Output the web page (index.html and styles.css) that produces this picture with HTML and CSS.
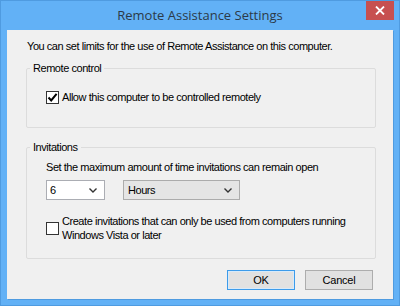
FILE: index.html
```html
<!DOCTYPE html>
<html>
  <head>
    <meta charset="UTF-8">
    <link rel="stylesheet" href="styles.css">
    <title>Remote Assistance Settings</title>
  </head>
  <body>
    <div id="window">
      <div id="titlebar">
        <span></span>
        <span class="title">Remote Assistance Settings</span>
        <button class="close" type="button">
          <svg width="10" height="9" viewBox="0 0 10 9"><path d="M1 0.5 L9 8.5 M9 0.5 L1 8.5" stroke="#fff" stroke-width="1.8" fill="none"/></svg>
        </button>
      </div>
      <div id="client">
        <p class="intro">You can set limits for the use of Remote Assistance on this computer.</p>
        <fieldset class="group group-control">
          <legend>Remote control</legend>
          <label class="check-row">
            <span class="checkbox checked">
              <svg width="11" height="11" viewBox="0 0 11 11"><path d="M1.5 5.5 L4.2 8.4 L9.6 1.8" stroke="#000" stroke-width="2" fill="none"/></svg>
            </span>
            <span>Allow this computer to be controlled remotely</span>
          </label>
        </fieldset>
        <fieldset class="group group-invites">
          <legend>Invitations</legend>
          <p class="hint">Set the maximum amount of time invitations can remain open</p>
          <div class="select-row">
            <div class="select select-edit">
              <span>6</span>
              <svg width="8" height="5" viewBox="0 0 8 5"><path d="M0.5 0.5 L4 4 L7.5 0.5" stroke="#333" stroke-width="1.4" fill="none"/></svg>
            </div>
            <div class="select select-list">
              <span>Hours</span>
              <svg width="8" height="5" viewBox="0 0 8 5"><path d="M0.5 0.5 L4 4 L7.5 0.5" stroke="#333" stroke-width="1.4" fill="none"/></svg>
            </div>
          </div>
          <label class="check-row check-two">
            <span class="checkbox"></span>
            <span>Create invitations that can only be used from computers running<br>Windows Vista or later</span>
          </label>
        </fieldset>
        <div class="buttons">
          <button class="btn btn-default" type="button">OK</button>
          <button class="btn" type="button">Cancel</button>
        </div>
      </div>
    </div>
  </body>
</html>
```

FILE: styles.css
```css
body {
  margin: 0;
  padding: 0;
  width: 400px;
  height: 306px;
  overflow: hidden;
  font-family: "Liberation Sans", Arial, sans-serif;
  font-size: 11px;
  letter-spacing: -0.45px;
  color: #000
}

#window {
  box-sizing: border-box;
  width: 400px;
  height: 306px;
  background-color: #62b1f6;
  border: 1px solid #4f9be0;
  display: flex;
  flex-direction: column
}

#titlebar {
  height: 29px;
  display: grid;
  grid-template-columns: 1fr auto 1fr;
  align-items: start
}

.title {
  font-family: "Open Sans", sans-serif;
  font-size: 13px;
  letter-spacing: 0;
  color: #2c3a48;
  padding-top: 5px
}

.close {
  justify-self: end;
  width: 28px;
  height: 19px;
  margin-right: 5px;
  border: none;
  padding: 0;
  background-color: #c75050;
  display: flex;
  align-items: center;
  justify-content: center
}

#client {
  flex: 1;
  margin: 0 6px 6px 6px;
  background-color: #f0f0f0;
  padding: 9px 17px 0 19px;
  box-shadow: 1px 1px 0 #4f9be0
}

.intro {
  margin: 0 0 8px 1px;
  line-height: 14px
}

.group {
  box-sizing: border-box;
  margin: 0;
  border: 1px solid #dcdcdc;
  border-radius: 2px;
  padding: 0 0 0 19px
}

.group legend {
  margin-left: -16px;
  padding: 0 3px;
  line-height: 14px
}

.group-control {
  height: 67px;
  padding-top: 15px
}

.group-invites {
  height: 119px;
  margin-top: 12px;
  padding-top: 6px
}

.check-row {
  display: flex;
  align-items: center;
  gap: 3px;
  line-height: 14px
}

.checkbox {
  box-sizing: border-box;
  width: 13px;
  height: 13px;
  border: 1px solid #333;
  background-color: #fff;
  display: flex;
  align-items: center;
  justify-content: center;
  flex-shrink: 0
}

.hint {
  margin: 0;
  line-height: 14px
}

.select-row {
  display: flex;
  gap: 18px;
  margin-top: 6px
}

.select {
  box-sizing: border-box;
  height: 20px;
  border: 1px solid #acacac;
  display: flex;
  align-items: center;
  justify-content: space-between;
  padding: 0 7px 0 3px
}

.select-edit {
  width: 59px;
  background-color: #fff;
  border-color: #abadb3
}

.select-list {
  width: 117px;
  background-color: #e5e5e5;
  padding-left: 4px
}

.check-two {
  margin-top: 14px
}

.buttons {
  display: flex;
  justify-content: flex-end;
  gap: 10px;
  margin: 11px 3px 0 0
}

.btn {
  box-sizing: border-box;
  width: 68px;
  height: 20px;
  padding: 0;
  font-family: "Liberation Sans", Arial, sans-serif;
  font-size: 11px;
  letter-spacing: -0.2px;
  color: #000;
  background-color: #e1e1e1;
  border: 1px solid #adadad
}

.btn-default {
  border-color: #3c9bea;
  box-shadow: inset 0 0 0 1px #d8eaf9
}
```
